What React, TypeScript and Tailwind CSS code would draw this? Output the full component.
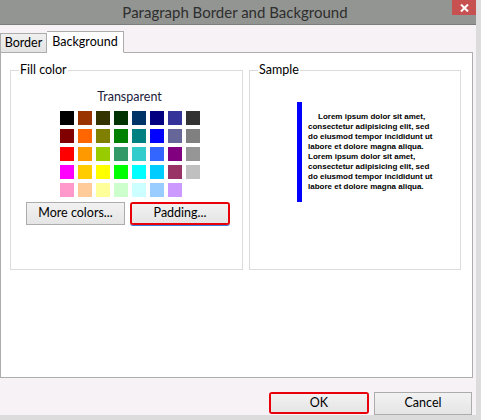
import React from 'react'

const swatches = [
  ['#000000', '#993300', '#333300', '#003300', '#003366', '#000080', '#333399', '#333333'],
  ['#800000', '#ff6600', '#808000', '#008000', '#008080', '#0000ff', '#666699', '#808080'],
  ['#ff0000', '#ff9900', '#99cc00', '#339966', '#33cccc', '#3366ff', '#800080', '#969696'],
  ['#ff00ff', '#ffcc00', '#ffff00', '#00ff00', '#00ffff', '#00ccff', '#993366', '#c0c0c0'],
  ['#ff99cc', '#ffcc99', '#ffff99', '#ccffcc', '#ccffff', '#99ccff', '#cc99ff'],
]

const sampleLines = [
  'Lorem ipsum dolor sit amet,',
  'consectetur adipisicing elit, sed',
  'do eiusmod tempor incididunt ut',
  'labore et dolore magna aliqua.',
  'Lorem ipsum dolor sit amet,',
  'consectetur adipisicing elit, sed',
  'do eiusmod tempor incididunt ut',
  'labore et dolore magna aliqua.',
]

const btn =
  'h-full w-full flex items-center justify-center bg-gradient-to-b from-[#f2f2f2] to-[#e5e5e5] border border-[#acacac] text-[12.5px] text-black'

export default function App() {
  return (
    <div
      className="w-[481px] h-[420px] bg-[#dcdcdc] overflow-hidden"
      style={{ fontFamily: 'Lato, "Open Sans", sans-serif' }}
    >
      <div className="w-[476px] h-[415px] flex flex-col bg-[#f6f2f6]">
        {/* title bar */}
        <div className="h-[25px] flex bg-[#939592] border-b border-[#7b7d7a]">
          <div className="flex-1 pl-[18px] text-center text-[15px] leading-[24px] text-[#2e2e2e]">
            Paragraph Border and Background
          </div>
          <div className="w-[24px] h-[15px] bg-[#c75050] flex items-center justify-center">
            <svg width="9" height="8" viewBox="0 0 9 8">
              <path d="M1 0.5 L8 7.5 M8 0.5 L1 7.5" stroke="#fff" strokeWidth="2" />
            </svg>
          </div>
        </div>

        {/* tabs */}
        <div className="flex items-end pt-[6px] h-[27px]">
          <div className="h-[19px] w-[47px] flex items-center justify-center pt-px bg-gradient-to-b from-[#f0f0f0] to-[#e4e4e4] border border-[#acacac] border-b-0 text-[12.5px] text-black">
            Border
          </div>
          <div className="relative z-10 -mb-px h-[22px] w-[77px] flex items-center justify-center bg-white border border-[#acacac] border-b-white border-l-0 text-[12.5px] text-black">
            Background
          </div>
        </div>

        {/* panel */}
        <div className="w-[473px] h-[326px] bg-white border border-[#adadad] flex gap-[6px] pl-[9px] pt-[9px]">
          <fieldset className="w-[233px] h-[208px] border border-[#dcdcdc] flex flex-col">
            <legend className="ml-[8px] px-[1px] text-[12.5px] leading-[16px] text-black">Fill color</legend>
            <div className="mt-[11px] text-center pl-[6px] text-[12.5px] leading-[16px] text-[#1a1a3a]">Transparent</div>
            <div className="mt-[6px] ml-[49px] grid grid-cols-[repeat(8,14px)] gap-[4px]">
              {swatches.flat().map((c, i) => (
                <div key={i} className="w-[14px] h-[14px]" style={{ backgroundColor: c }} />
              ))}
            </div>
            <div className="mt-[5px] ml-[15px] flex gap-[5px] h-[23px]">
              <div className="w-[99px] h-[23px]">
                <div className={btn}>More colors...</div>
              </div>
              <div className="w-[100px] h-[23px] rounded-[3px] border-2 border-[#e8000b] shadow-[0_1px_0_#3b7ddb] overflow-hidden">
                <div className={btn + ' border-0'}>Padding...</div>
              </div>
            </div>
          </fieldset>

          <fieldset className="w-[212px] h-[208px] border border-[#dcdcdc] flex flex-col">
            <legend className="ml-[8px] px-[1px] text-[12.5px] leading-[16px] text-black">Sample</legend>
            <div className="mt-[24px] ml-[47px] w-[130px] border-l-[5px] border-[#0000ff] pl-[6px] py-[10px]">
              {sampleLines.map((l, i) => (
                <div
                  key={i}
                  className={'h-[10px] leading-[10px] text-[8px] font-bold text-black whitespace-nowrap ' + (i === 0 ? 'pl-[10px]' : '')}
                  style={{ fontFamily: '"Liberation Sans", Arial, sans-serif' }}
                >
                  {l}
                </div>
              ))}
            </div>
          </fieldset>
        </div>

        {/* footer */}
        <div className="flex justify-end gap-[5px] pr-[4px] pt-[14px]">
          <div className="w-[100px] h-[22px] rounded-[3px] border-2 border-[#e8000b] overflow-hidden">
            <div className={btn + ' border-0'}>OK</div>
          </div>
          <div className="w-[98px] h-[23px]">
            <div className={btn}>Cancel</div>
          </div>
        </div>
      </div>
    </div>
  )
}
